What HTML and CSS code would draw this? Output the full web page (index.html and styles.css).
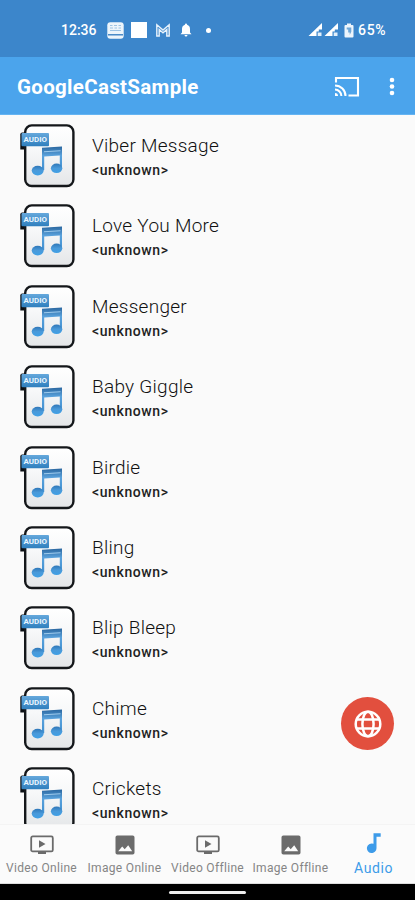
FILE: index.html
```html
<!DOCTYPE html>
<html lang="en">
<head>
<meta charset="utf-8">
<title>GoogleCastSample</title>
<link rel="stylesheet" href="styles.css">
</head>
<body>
<svg class="defs" aria-hidden="true">
  <defs>
    <linearGradient id="paper" x1="0" y1="0" x2="0" y2="1"><stop offset="0" stop-color="#fff"/><stop offset=".4" stop-color="#f7f8f9"/><stop offset="1" stop-color="#e4e6e8"/></linearGradient>
    <linearGradient id="beam" gradientUnits="userSpaceOnUse" x1="0" y1="22" x2="0" y2="46"><stop offset="0" stop-color="#27639c"/><stop offset=".4" stop-color="#5aa2dc"/><stop offset="1" stop-color="#3f8fd0"/></linearGradient>
    <linearGradient id="head" x1="0" y1="0" x2="0" y2="1"><stop offset="0" stop-color="#2f77b8"/><stop offset=".5" stop-color="#4a9ada"/><stop offset="1" stop-color="#3fa0e6"/></linearGradient>
    <linearGradient id="tag" x1="0" y1="0" x2="0" y2="1"><stop offset="0" stop-color="#65a8dc"/><stop offset="1" stop-color="#2f7fbe"/></linearGradient>
  </defs>
  <symbol id="audio-file" viewBox="0 0 56 64">
    <path d="M.3 10.5q0-2 2-2H6v17H.3z" fill="#0c1015"/>
    <rect x="5.200" y="1.400" width="48.200" height="60.600" rx="6.500" fill="url(#paper)" stroke="#14171a" stroke-width="2.400"/>
    <path d="M22 23.700 42 22.500V44h-2.200V31.500L24.200 32.600V46H22z" fill="url(#beam)"/>
    <path d="M24 27.300 40.500 26.200v1L24 28.300z" fill="#9fcbed"/>
    <ellipse cx="17.700" cy="46.600" rx="6" ry="4.800" fill="url(#head)"/>
    <ellipse cx="36.600" cy="44.300" rx="5.700" ry="4.800" fill="url(#head)"/>
    <rect x="1.500" y="9" width="27.500" height="13.200" rx="1" fill="url(#tag)"/>
  </symbol>
  <symbol id="video" viewBox="0 0 24 20">
    <rect x="1.200" y="1.400" width="21.600" height="15" rx="1.500" fill="none" stroke="#6b6b6b" stroke-width="1.800"/>
    <path d="M9 5.200v7.600l6.500-3.800zM8 17h8v2H8z" fill="#6b6b6b"/>
  </symbol>
  <symbol id="image" viewBox="0 0 24 20">
    <path fill-rule="evenodd" d="M4.300.500h15.400q1.800 0 1.800 1.800v15.400q0 1.800-1.800 1.800H4.300q-1.800 0-1.800-1.800V2.300Q2.500.500 4.300.500M5.200 16.300h14l-4-6-3.500 4-2.500-2.800z" fill="#6b6b6b"/>
  </symbol>
  <symbol id="signal" viewBox="0 0 15 14"><path d="M14 0v6.500h-3.200v2H8.500V13H.500z" fill="#fff"/><path d="M9.700 9.500h3.800V13H9.700z" fill="#e2effa"/></symbol>
</svg>
<div class="screen">
  <header class="status">
    <span class="clock">12:36</span>
    <svg class="s-news" viewBox="0 0 17 17"><rect x=".3" y=".3" width="16.400" height="16.400" rx="3" fill="#edf5fb"/><path d="M3 3.500h2.500M7 3.500h3M11.500 3.500H14M3 6h3M7.500 6H10M11.500 6H14M3 8.500h11" stroke="#9dc3e4"/><path d="M1 12.800h15" stroke="#2f79bf" stroke-width="1.300"/></svg>
    <span class="s-square"></span>
    <svg class="s-mail" viewBox="0 0 16 14"><path d="M1.800 13V1.800L8 7l6.200-5.200V13h-2.400V6.500L8 9.800 4.200 6.500V13z" fill="none" stroke="#e7f2fb" stroke-width="1.400"/></svg>
    <svg class="s-bell" viewBox="0 0 12 14"><path d="M6 .500q1 0 1.100 1.200Q10 2.800 10 6v3.500l1.500 1.800H.500L2 9.500V6q0-3.200 2.900-4.300Q5 .500 6 .500M4.500 12h3Q7.300 13.500 6 13.500T4.500 12" fill="#fff"/></svg>
    <span class="s-dot"></span>
    <span class="spacer"></span>
    <svg class="s-signal"><use href="#signal"/></svg>
    <svg class="s-signal"><use href="#signal"/></svg>
    <svg class="s-battery" viewBox="0 0 10 15"><path d="M3 .500h4V2h1.500q1 0 1 1v10.500q0 1-1 1h-7q-1 0-1-1V3q0-1 1-1H3z" fill="#edf5fc"/><path d="M2.700 4.500h4.600v4.300L5.700 12V9.500H4.200v-3H2.700z" fill="#6fa8d8"/></svg>
    <span class="percent">65%</span>
  </header>
  <div class="appbar">
    <h1>GoogleCastSample</h1>
    <svg class="cast" viewBox="0 0 26 22"><path d="M2 6.500V2h22v17.500H14.500" fill="none" stroke="#fff" stroke-width="2.100"/><path d="M1 9.500A10.500 10.500 0 0 1 11.500 20M1 13.600A6.400 6.400 0 0 1 7.400 20" fill="none" stroke="#fff" stroke-width="2"/><path d="M1 17a3 3 0 0 1 3 3H1z" fill="#fff"/></svg>
    <svg class="more" viewBox="0 0 6 20"><g fill="#fff"><circle cx="3" cy="3" r="2.300"/><circle cx="3" cy="9.500" r="2.300"/><circle cx="3" cy="16" r="2.300"/></g></svg>
  </div>
  <main class="list">
    <div class="row"><svg class="file" viewBox="0 0 56 64"><use href="#audio-file"/><text x="3.500" y="18.300" textLength="23.500" lengthAdjust="spacingAndGlyphs" class="tag-text">AUDIO</text></svg><div><p class="title">Viber Message</p><p class="artist">&lt;unknown&gt;</p></div></div>
    <div class="row"><svg class="file" viewBox="0 0 56 64"><use href="#audio-file"/><text x="3.500" y="18.300" textLength="23.500" lengthAdjust="spacingAndGlyphs" class="tag-text">AUDIO</text></svg><div><p class="title">Love You More</p><p class="artist">&lt;unknown&gt;</p></div></div>
    <div class="row"><svg class="file" viewBox="0 0 56 64"><use href="#audio-file"/><text x="3.500" y="18.300" textLength="23.500" lengthAdjust="spacingAndGlyphs" class="tag-text">AUDIO</text></svg><div><p class="title">Messenger</p><p class="artist">&lt;unknown&gt;</p></div></div>
    <div class="row"><svg class="file" viewBox="0 0 56 64"><use href="#audio-file"/><text x="3.500" y="18.300" textLength="23.500" lengthAdjust="spacingAndGlyphs" class="tag-text">AUDIO</text></svg><div><p class="title">Baby Giggle</p><p class="artist">&lt;unknown&gt;</p></div></div>
    <div class="row"><svg class="file" viewBox="0 0 56 64"><use href="#audio-file"/><text x="3.500" y="18.300" textLength="23.500" lengthAdjust="spacingAndGlyphs" class="tag-text">AUDIO</text></svg><div><p class="title">Birdie</p><p class="artist">&lt;unknown&gt;</p></div></div>
    <div class="row"><svg class="file" viewBox="0 0 56 64"><use href="#audio-file"/><text x="3.500" y="18.300" textLength="23.500" lengthAdjust="spacingAndGlyphs" class="tag-text">AUDIO</text></svg><div><p class="title">Bling</p><p class="artist">&lt;unknown&gt;</p></div></div>
    <div class="row"><svg class="file" viewBox="0 0 56 64"><use href="#audio-file"/><text x="3.500" y="18.300" textLength="23.500" lengthAdjust="spacingAndGlyphs" class="tag-text">AUDIO</text></svg><div><p class="title">Blip Bleep</p><p class="artist">&lt;unknown&gt;</p></div></div>
    <div class="row"><svg class="file" viewBox="0 0 56 64"><use href="#audio-file"/><text x="3.500" y="18.300" textLength="23.500" lengthAdjust="spacingAndGlyphs" class="tag-text">AUDIO</text></svg><div><p class="title">Chime</p><p class="artist">&lt;unknown&gt;</p></div></div>
    <div class="row"><svg class="file" viewBox="0 0 56 64"><use href="#audio-file"/><text x="3.500" y="18.300" textLength="23.500" lengthAdjust="spacingAndGlyphs" class="tag-text">AUDIO</text></svg><div><p class="title">Crickets</p><p class="artist">&lt;unknown&gt;</p></div></div>
  </main>
  <nav class="tabs">
    <div class="tab"><svg><use href="#video"/></svg><span>Video Online</span></div>
    <div class="tab"><svg><use href="#image"/></svg><span>Image Online</span></div>
    <div class="tab"><svg><use href="#video"/></svg><span>Video Offline</span></div>
    <div class="tab"><svg><use href="#image"/></svg><span>Image Offline</span></div>
    <div class="tab active"><svg viewBox="0 0 24 20"><path d="M11.500.200H18.700v3.500h-4.200v11.500a4.800 4.800 0 1 1-3-4.400z" fill="#3d9be9"/></svg><span>Audio</span></div>
  </nav>
  <footer class="system"><span></span></footer>
  <button class="fab" aria-label="Browse web"><svg viewBox="0 0 28 28"><g fill="none" stroke="#fff" stroke-width="2.500"><circle cx="14" cy="14" r="12.300"/><ellipse cx="14" cy="14" rx="5.600" ry="12.300"/><path d="M3 9.500h22M3 18.500h22"/></g></svg></button>
</div>
</body>
</html>
```
FILE: styles.css
```css
* { box-sizing: border-box; }
body { margin: 0; background: #fafafa; font-family: Roboto, "Liberation Sans", sans-serif; }
h1, p { margin: 0; }
svg { display: block; flex: none; }
.defs { position: absolute; width: 0; height: 0; }
.tag-text { font: 700 6.8px Roboto, sans-serif; fill: #e9f5ff; }
.screen { position: relative; width: 415px; height: 900px; display: flex; flex-direction: column; overflow: hidden; }
.status { flex: none; height: 57px; padding: 3px 27px 0 61px; display: flex; align-items: center; background: #3c86cb; color: #fff; }
.clock, .percent { font-weight: 500; font-size: 14px; line-height: 18px; letter-spacing: 0; }
.clock { width: 46px; }
.percent { width: 30px; margin-left: 4px; letter-spacing: .7px; }
.s-news { width: 17px; height: 17px; margin-right: 7px; }
.s-square { width: 16px; height: 16px; background: #fff; margin-right: 8px; }
.s-mail { width: 16px; height: 14px; margin-right: 9px; }
.s-bell { width: 12px; height: 14px; margin-right: 14px; }
.s-dot { width: 5px; height: 5px; border-radius: 50%; background: #fff; }
.spacer { flex: 1; }
.s-signal { width: 15px; height: 14px; margin-right: 1px; }
.s-battery { width: 10px; height: 15px; margin-left: 4px; }
.appbar { flex: none; height: 58px; padding: 2px 20px 0 17px; display: flex; align-items: center; background: #4ba4ec; color: #fff; border-bottom: 1px solid #65b4f2; }
.appbar h1 { flex: 1; font-size: 20.5px; line-height: 26px; font-weight: 700; letter-spacing: .32px; }
.cast { width: 26px; height: 22px; margin-right: 29px; }
.more { width: 6px; height: 20px; }
.list { flex: 1; min-height: 0; padding-top: 9px; overflow: hidden; background: #fafafa; }
.row { height: 80.4px; padding-left: 20px; display: flex; gap: 16px; }
.file { width: 56px; height: 64px; }
.title { padding-top: 10px; font-size: 19px; line-height: 24px; font-weight: 300; letter-spacing: .27px; color: #111; white-space: nowrap; }
.artist { margin-top: 3px; font-size: 14px; line-height: 18px; font-weight: 500; letter-spacing: .6px; color: #222; }
.tabs { flex: none; height: 60px; display: grid; grid-template-columns: repeat(5, 83px); background: #fbfbfb; border-top: 1px solid #f4f4f4; border-bottom: 1px solid #ddd; }
.tab { display: flex; flex-direction: column; align-items: center; padding-top: 10px; font-size: 12px; letter-spacing: .32px; color: #858585; white-space: nowrap; }
.tab svg { width: 24px; height: 20px; }
.tab span { margin-top: 5px; line-height: 16px; }
.tab.active { padding-top: 8px; font-size: 14px; letter-spacing: .6px; color: #3d9be9; }
.active span { margin-top: 7px; }
.system { flex: none; height: 16px; padding-top: 7px; background: #000; }
.system span { display: block; width: 77px; height: 3px; margin: 0 auto; border-radius: 2px; background: #eee; }
.fab { position: absolute; left: 341px; top: 697px; width: 53px; height: 53px; padding: 0; border: 0; border-radius: 50%; background: #e24f3e; display: grid; place-items: center; }
.fab svg { width: 28px; height: 28px; }
```
